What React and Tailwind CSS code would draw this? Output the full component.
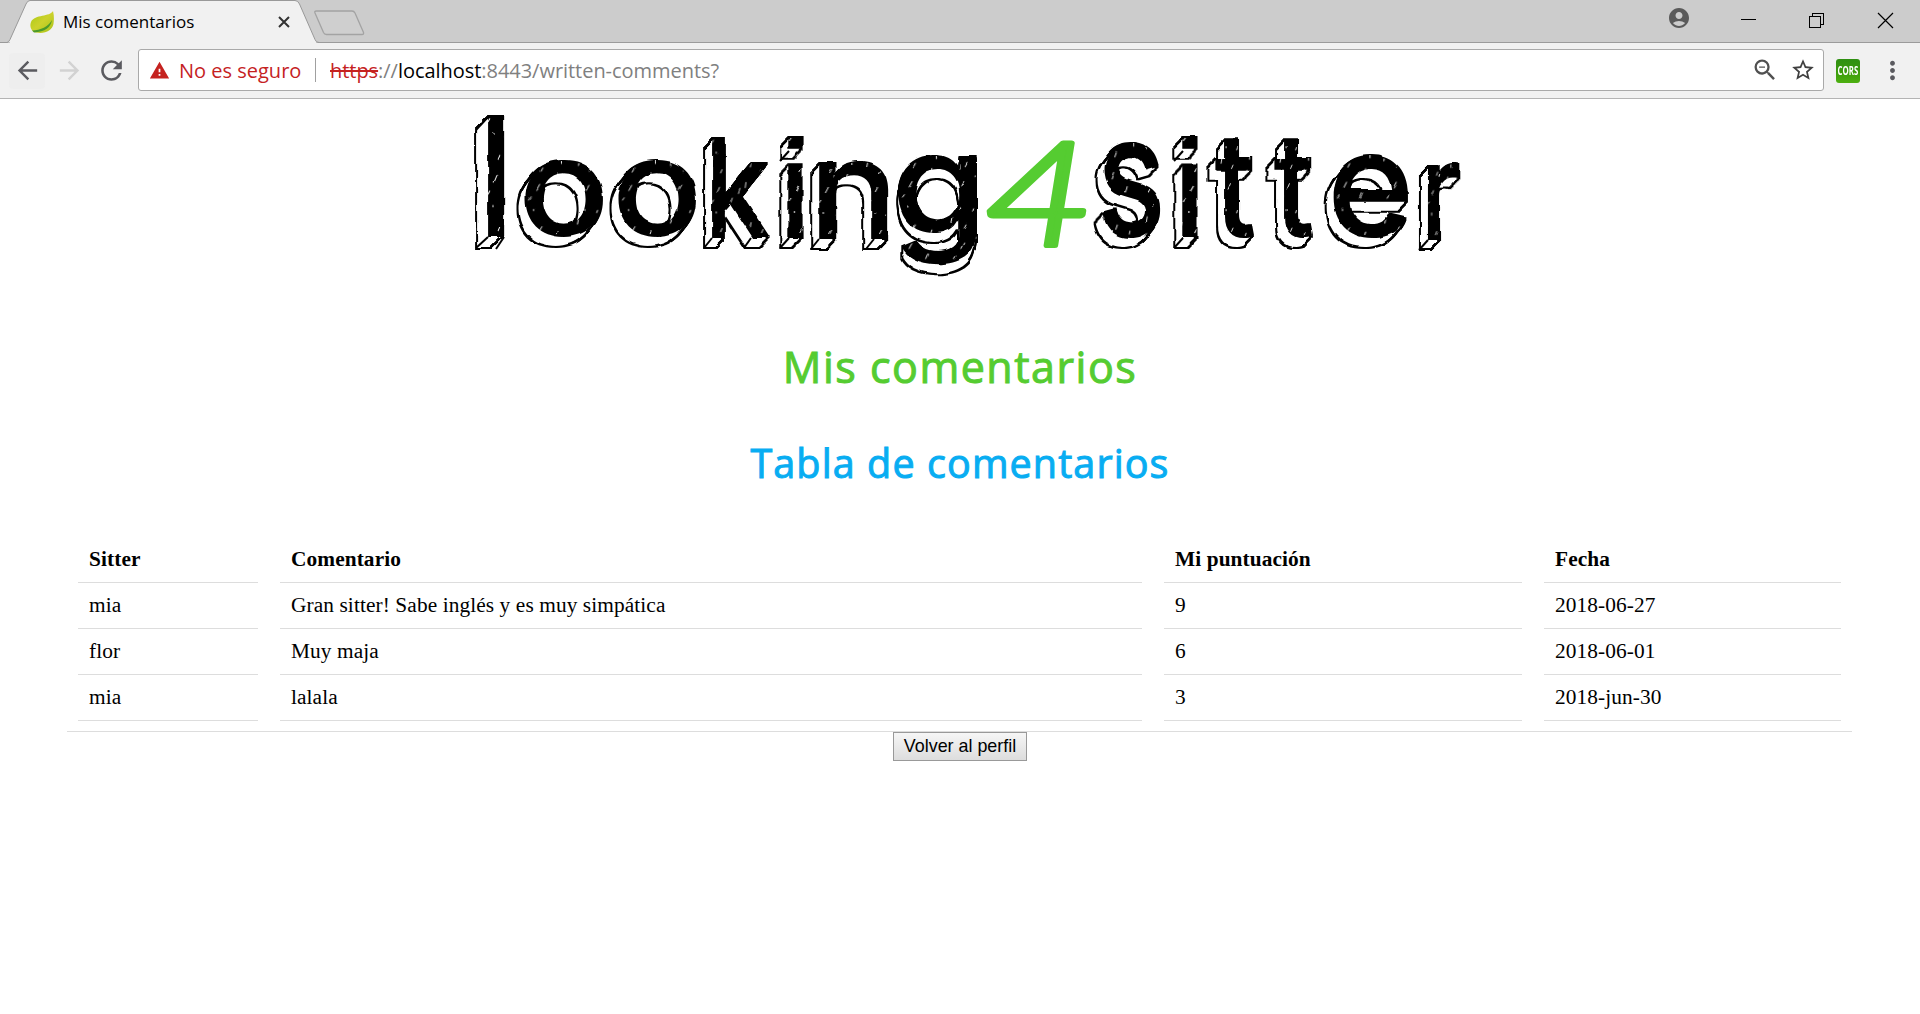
import React, { useMemo } from "react";
import {
  MdArrowBack,
  MdArrowForward,
  MdRefresh,
  MdStarBorder,
  MdMoreVert,
  MdAccountCircle,
  MdWarning,
  MdZoomOut,
} from "react-icons/md";

/* Letters of the logo: ink box (x0, y0, x1, y1), depth filter and edge lines of the 3D side. */
const LETTERS = [
  { c: "l", box: [488, 116, 504, 237], f: "url(#deepest)", edges: [[488, 117, 476, 130], [504, 237, 496, 249], [488, 237, 476, 248]] },
  { c: "o", box: [525, 161, 602, 237], f: "url(#deep)" },
  { c: "o", box: [618, 161, 695, 237], f: "url(#deep)" },
  { c: "k", box: [712, 138, 769, 238], f: "url(#deep)", edges: [[712, 238, 704, 248], [751, 238, 744, 248]] },
  { c: "i", font: "Liberation Sans, sans-serif", box: [788, 137, 802, 238], f: "url(#deep)", edges: [[789, 238, 780, 248], [789, 151, 780, 161]] },
  { c: "n", box: [819, 162, 888, 239], f: "url(#deep)", edges: [[819, 239, 811, 249], [874, 239, 866, 249]] },
  { c: "g", box: [898, 156, 976, 265], f: "url(#low)" },
  { c: "4", box: [989, 142, 1083, 245], green: true },
  { c: "s", box: [1102, 143, 1160, 238], f: "url(#deep)" },
  { c: "i", font: "Liberation Sans, sans-serif", box: [1182, 137, 1197, 238], f: "url(#deep)", edges: [[1183, 238, 1174, 248], [1183, 151, 1174, 161]] },
  { c: "t", box: [1215, 139, 1253, 238], f: "url(#deep)" },
  { c: "t", box: [1274, 139, 1312, 238], f: "url(#deep)" },
  { c: "e", box: [1333, 156, 1407, 238], f: "url(#deep)" },
  { c: "r", box: [1428, 164, 1459, 240], f: "url(#deep)", edges: [[1428, 240, 1419, 250]] },
];

const familyOf = (letter) => letter.font || "Inter, sans-serif";

function fit(ctx, letter) {
  ctx.font = letter.green ? "italic 300 140px Lato, sans-serif" : `500 140px ${familyOf(letter)}`;
  const m = ctx.measureText(letter.c);
  const [x0, y0, x1, y1] = letter.box;
  const sx = (x1 - x0) / (m.actualBoundingBoxRight + m.actualBoundingBoxLeft);
  const sy = (y1 - y0) / (m.actualBoundingBoxAscent + m.actualBoundingBoxDescent);
  return `translate(${x0 + m.actualBoundingBoxLeft * sx} ${y0 + m.actualBoundingBoxAscent * sy}) scale(${sx} ${sy})`;
}

/* Extrudes its source towards (dx, dy): white sides with an inked outline. */
function Extrude({ id, dx, dy }) {
  const steps = Array.from({ length: 11 }, (_, i) => i / 10);
  return (
    <filter id={id} x="440" y="90" width="1060" height="220" filterUnits="userSpaceOnUse" colorInterpolationFilters="sRGB">
      {steps.map((s, i) => (
        <feOffset key={i} in="SourceAlpha" dx={dx * s} dy={dy * s} result={"s" + i} />
      ))}
      <feMerge result="sweep">
        {steps.map((s, i) => (
          <feMergeNode key={i} in={"s" + i} />
        ))}
      </feMerge>
      <feMorphology in="sweep" operator="dilate" radius="1" result="ink" />
      <feMorphology in="sweep" operator="erode" radius="1" result="inner" />
      <feFlood floodColor="#fff" />
      <feComposite in2="inner" operator="in" result="side" />
      <feMerge result="all">
        <feMergeNode in="ink" />
        <feMergeNode in="side" />
        <feMergeNode in="SourceGraphic" />
      </feMerge>
      <feTurbulence type="fractalNoise" baseFrequency="0.06" numOctaves="2" seed="4" result="noise" />
      <feDisplacementMap in="all" in2="noise" scale="3.500" xChannelSelector="R" yChannelSelector="G" result="wobbly" />
      <feGaussianBlur in="wobbly" stdDeviation="0.4" />
    </filter>
  );
}

function Logo() {
  const fits = useMemo(() => {
    const ctx = document.createElement("canvas").getContext("2d");
    return LETTERS.map((l) => fit(ctx, l));
  }, []);
  return (
    <svg viewBox="460 99 1020 191" className="ml-[460px] block h-[191px] w-[1020px] overflow-visible" role="img" aria-label="looking4sitter">
      <defs>
        <Extrude id="deepest" dx={-12} dy={11} />
        <Extrude id="deep" dx={-8} dy={10} />
        <Extrude id="low" dx={-1} dy={10} />
        <pattern id="scribble" width="47" height="61" patternUnits="userSpaceOnUse">
          <rect width="47" height="61" fill="#000" />
          <path d="M3 4l-1 6M12 22l-2 3M19 9l-3 6M27 35l-1 3M34 20l-2 5M9 45l-1 5M41 44v4M30 3l-1 2M22 52l-2 4M43 10l-2 5M15 34v2M37 57l-1 3" stroke="#fff" strokeWidth="0.9" fill="none" />
        </pattern>
      </defs>
      {LETTERS.map((l, i) =>
        l.green ? (
          <text key={i} transform={fits[i]} fill="#55cc31" stroke="#55cc31" strokeWidth="5" strokeLinejoin="round" fontFamily="Lato, sans-serif" fontStyle="italic" fontWeight="300" fontSize="140">{l.c}</text>
        ) : (
          <g key={i}>
            <g filter={l.f}>
              <text transform={fits[i]} fill="url(#scribble)" fontFamily={familyOf(l)} fontWeight="500" fontSize="140">{l.c}</text>
            </g>
            {(l.edges || []).map(([a, b, c, d], k) => (
              <line key={k} x1={a} y1={b} x2={c} y2={d} stroke="#000" strokeWidth="2" />
            ))}
          </g>
        )
      )}
    </svg>
  );
}

function TabStrip() {
  return (
    <div className="relative flex h-[43px] border-b border-[#9b9b9b] bg-[#cccccc]">
      <svg className="absolute left-0 top-0" width="380" height="43" fill="none">
        <path d="M0 42.5H7Q9 42 10 39.5L26 4Q27.500 .5 30 .5H295Q298 .5 299.500 4L315 39.500Q316 42.500 319 42.500" fill="#f1f1f1" stroke="#999" />
        <path d="M10 43H316" stroke="#f1f1f1" strokeWidth="2" />
        <path d="M316.500 11H352Q354 11 355 13L363.500 32.500Q364 34.500 362 34.500H326.500Q324.500 34.500 323.500 32.500L315 13Q314 11 316.500 11Z" fill="#cfcfcf" stroke="#a3a3a3" strokeWidth="1.3" />
      </svg>
      <div className="relative flex h-[42px] w-[317px] items-center pl-[30px]">
        <svg width="24" height="24" viewBox="0 0 24 24" className="mt-[2px]">
          <defs>
            <linearGradient id="leaf" x1="0" y1="0" x2="1" y2="1">
              <stop offset="0" stopColor="#a8c814" />
              <stop offset=".5" stopColor="#ccd22c" />
              <stop offset="1" stopColor="#a9c21a" />
            </linearGradient>
          </defs>
          <path d="M23 1C20 7 5 4 1 12C-1 17 2 22 6 22.500C15 24 22 21 23.500 14Q24.500 7 23 1Z" fill="url(#leaf)" />
          <path d="M2 20.500C11 20 18 17 22 10C21 17 15 22 4 22.500Z" fill="#4c9a2a" />
        </svg>
        <span className="ml-[9px] mt-[2px] font-['Open_Sans',sans-serif] text-[17px] text-black">Mis comentarios</span>
        <svg className="absolute left-[278px] top-[16px]" width="12" height="12" stroke="#333" strokeWidth="2">
          <path d="M1 1l10 10M11 1L1 11" />
        </svg>
      </div>
      <div className="relative ml-auto flex h-[42px]">
        <MdAccountCircle className="mr-[45px] mt-[6px] size-6 text-[#5a5a5a]" />
        <svg width="184" height="42" fill="none" stroke="#000" shapeRendering="crispEdges">
          <path d="M5 19.500h15" />
          <path d="M73.500 16.500h11v11h-11zM76.500 16v-2.500h11v11h-3" />
          <path d="M142 13l15 15M157 13l-15 15" shapeRendering="auto" strokeWidth="1.2" />
        </svg>
      </div>
    </div>
  );
}

function Toolbar() {
  return (
    <div className="flex h-[56px] items-center border-b border-[#b4b4b4] bg-[#f1f1f1] font-['Open_Sans',sans-serif] text-[20px]">
      <div className="ml-[9px] flex h-[36px] w-[36px] items-center justify-center rounded-sm bg-[#eeeeee]">
        <MdArrowBack className="size-[29px] text-[#5a5a5f]" />
      </div>
      <MdArrowForward className="ml-[10px] size-[29px] text-[#d2d2d2]" />
      <MdRefresh className="ml-[12px] size-[31px] text-[#5a5a5f]" />
      <div className="mb-px ml-[11px] flex h-[42px] w-[1686px] items-center rounded-[3px] border border-[#a9a9a9] bg-white">
        <MdWarning className="ml-[10px] size-[21px] text-[#c5221f]" />
        <span className="ml-[9px] mt-px w-[123px] whitespace-nowrap text-[#c5221f]">No es seguro</span>
        <span className="ml-[13px] h-6 w-px bg-[#a0a0a0]" />
        <span className="ml-[14px] mt-px whitespace-nowrap tracking-[-0.04px] text-[#808080]">
          <span className="text-[#c5221f] line-through">https</span>://<span className="text-black">localhost</span>:8443/written-comments?
        </span>
        <MdZoomOut className="ml-auto size-[28px] text-[#505050]" />
        <MdStarBorder className="ml-[11px] mr-[7px] size-[26px] text-[#404040]" />
      </div>
      <div className="ml-[12px] flex size-6 items-center justify-center rounded-[3px] bg-gradient-to-b from-[#2f8f12] via-[#3a9a0c] to-[#4db010] font-['Open_Sans',sans-serif] text-[12px] font-bold text-white">
        <span className="scale-x-[.65]">CORS</span>
      </div>
      <MdMoreVert className="ml-[18px] size-[29px] text-[#5a5a5f]" />
    </div>
  );
}

const COLUMNS = [
  { title: "Sitter", cells: ["mia", "flor", "mia"] },
  { title: "Comentario", cells: ["Gran sitter! Sabe inglés y es muy simpática", "Muy maja", "lalala"] },
  { title: "Mi puntuación", cells: ["9", "6", "3"] },
  { title: "Fecha", cells: ["2018-06-27", "2018-06-01", "2018-jun-30"] },
];

function CommentTable() {
  return (
    <div className="ml-[67px] mt-[46px] grid h-[195px] w-[1785px] grid-cols-[180px_862px_358px_297px] gap-x-[22px] border-b border-[#dddddd] px-[11px] font-['Liberation_Serif',serif] text-[21.33px] tracking-[0.1px] text-black">
      {COLUMNS.map((col) => (
        <div key={col.title}>
          <div className="flex h-[46px] items-center border-b border-[#dddddd] pl-[11px] font-bold">{col.title}</div>
          {col.cells.map((cell, i) => (
            <div key={i} className="flex h-[46px] items-center border-b border-[#dddddd] pl-[11px]">{cell}</div>
          ))}
        </div>
      ))}
    </div>
  );
}

export default function App() {
  return (
    <div className="h-[1014px] w-[1920px] overflow-hidden bg-white">
      <TabStrip />
      <Toolbar />
      <main className="flex flex-col">
        <Logo />
        <h1 className="mt-[47px] text-center font-['Open_Sans',sans-serif] text-[43px] font-normal leading-[60px] tracking-[1.5px] text-[#55cc31] [-webkit-text-stroke:1px_#55cc31]">Mis comentarios</h1>
        <h2 className="mt-[38px] text-center font-['Open_Sans',sans-serif] text-[39.5px] font-normal leading-[56px] tracking-[1.1px] text-[#08adf2] [-webkit-text-stroke:1px_#08adf2]">Tabla de comentarios</h2>
        <CommentTable />
        <button className="mx-auto h-[29px] w-[134px] border border-[#999999] bg-gradient-to-b from-[#f6f6f6] to-[#dddddd] font-['Liberation_Sans',sans-serif] text-[17.9px] leading-[25px] text-black">Volver al perfil</button>
      </main>
    </div>
  );
}
